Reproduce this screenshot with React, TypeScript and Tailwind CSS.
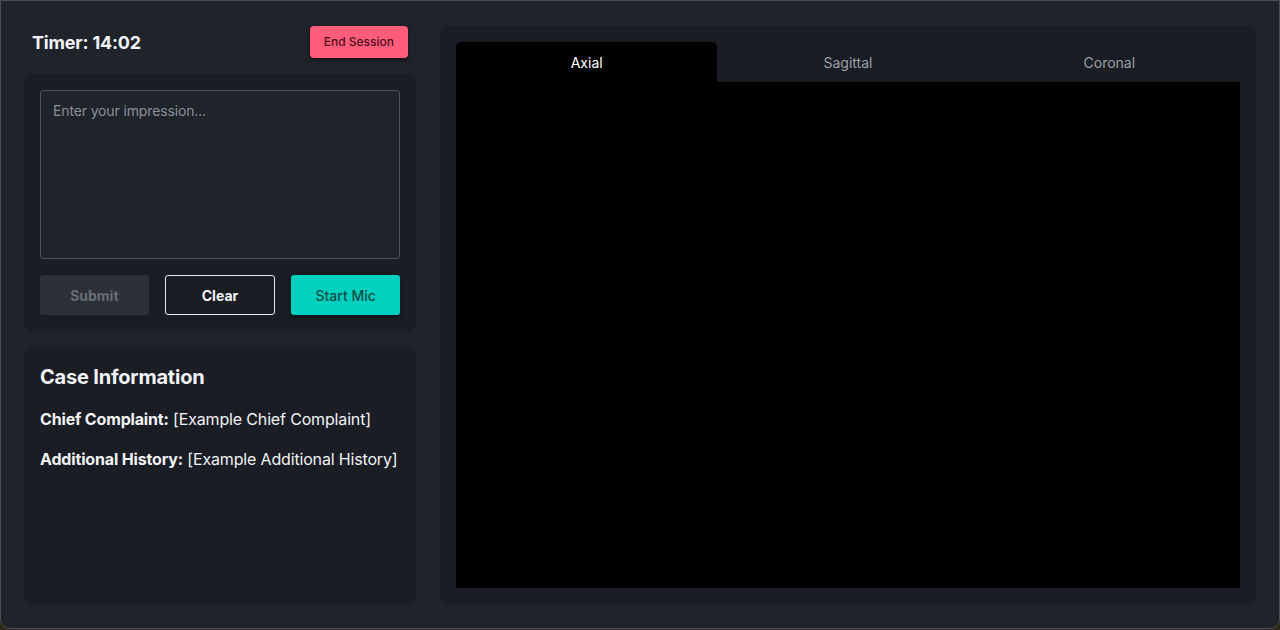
export default function App() {
  const font = { fontFamily: 'Inter, "Noto Sans", sans-serif' };
  return (
    <div className="w-[1280px] h-[630px] bg-[#2e2a1c] overflow-hidden" style={font}>
      <div className="h-[629px] rounded-b-[10px] border border-[#4a4d53] bg-[#1f232a] flex gap-6 px-[23px] pt-[25px] pb-[24px]">
        {/* Left column */}
        <div className="w-[392px] flex flex-col">
          <div className="h-8 flex items-center justify-between pl-2 pr-2">
            <div className="text-[18px] font-bold text-[#f1f3f6] tracking-[-0.01em]">Timer: 14:02</div>
            <button className="h-8 px-[14px] rounded-[4px] bg-[#ff5c7a] text-[12px] font-medium text-[#4a0f1c] shadow-[0_2px_4px_rgba(0,0,0,0.45)]">
              End Session
            </button>
          </div>
          <div className="mt-4 rounded-lg bg-[#1a1d24] p-4">
            <textarea
              className="w-full h-[169px] resize-none rounded-[3px] border border-[#4d525a] bg-[#1f232a] px-3 py-[9px] text-[14px] text-[#d0d4da] placeholder-[#8a8f98] outline-none block tracking-[-0.01em]"
              placeholder="Enter your impression..."
            />
            <div className="mt-4 flex gap-4">
              <button className="flex-1 h-10 rounded-[3px] bg-[#2c3038] text-[14px] font-bold text-[#686d76]">Submit</button>
              <button className="flex-1 h-10 rounded-[3px] border border-[#e8eaee] text-[14px] font-bold text-[#f1f3f6]">Clear</button>
              <button className="flex-1 h-10 rounded-[3px] bg-[#00d1bf] text-[14px] font-medium text-[#0d4b46] shadow-[0_2px_4px_rgba(0,0,0,0.4)]">Start Mic</button>
            </div>
          </div>
          <div className="mt-4 flex-1 rounded-lg bg-[#1a1d24] px-4 pt-4">
            <div className="text-[20px] font-bold text-[#f1f3f6] leading-[28px] tracking-[-0.01em]">Case Information</div>
            <div className="mt-4 text-[16px] leading-6 text-[#f1f3f6] tracking-[-0.01em] whitespace-nowrap">
              <span className="font-bold">Chief Complaint:</span> [Example Chief Complaint]
            </div>
            <div className="mt-4 text-[16px] leading-6 text-[#f1f3f6] tracking-[-0.01em] whitespace-nowrap">
              <span className="font-bold">Additional History:</span> [Example Additional History]
            </div>
          </div>
        </div>
        {/* Right panel */}
        <div className="flex-1 rounded-lg bg-[#1a1d24] p-4 flex flex-col">
          <div className="flex h-10">
            <div className="flex-1 rounded-t-[5px] bg-black flex items-center justify-center text-[14px] text-white">Axial</div>
            <div className="flex-1 flex items-center justify-center text-[14px] text-[#9aa0a8]">Sagittal</div>
            <div className="flex-1 flex items-center justify-center text-[14px] text-[#9aa0a8]">Coronal</div>
          </div>
          <div className="flex-1 bg-black" />
        </div>
      </div>
    </div>
  );
}
